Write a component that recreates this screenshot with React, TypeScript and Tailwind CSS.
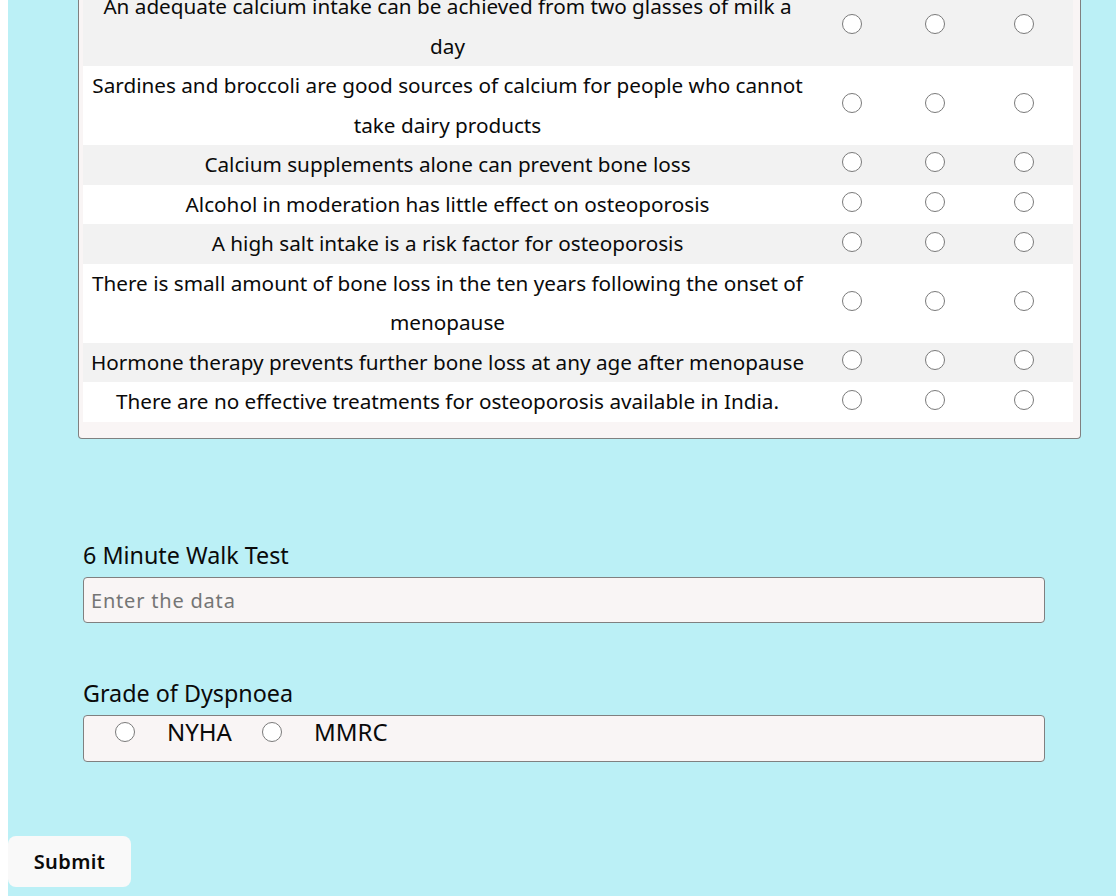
import React from "react";

const rows: { text: string }[] = [
  { text: "An adequate calcium intake can be achieved from two glasses of milk a day" },
  { text: "Sardines and broccoli are good sources of calcium for people who cannot take dairy products" },
  { text: "Calcium supplements alone can prevent bone loss" },
  { text: "Alcohol in moderation has little effect on osteoporosis" },
  { text: "A high salt intake is a risk factor for osteoporosis" },
  { text: "There is small amount of bone loss in the ten years following the onset of menopause" },
  { text: "Hormone therapy prevents further bone loss at any age after menopause" },
  { text: "There are no effective treatments for osteoporosis available in India." },
];

const Radio: React.FC = () => (
  <span className="inline-block w-5 h-5 rounded-full border border-[#7a7a7a] bg-white" />
);

const App: React.FC = () => {
  return (
    <div
      className="h-[896px] overflow-hidden bg-white pl-2"
      style={{ fontFamily: '"Noto Sans", "Open Sans", sans-serif' }}
    >
      <div className="h-full bg-[#bbf0f6] flex flex-col">
        {/* questionnaire card (top part scrolled away) */}
        <div className="-mt-[13px] ml-[70px] w-[1003px] border-x border-b border-[#808080] rounded-b-[4px] bg-[#f9f5f5] pl-[4px] pr-[6px] pb-[16px]">
          <table className="w-[990px] border-collapse text-[20.7px] text-[#0a0a0a]">
            <tbody>
              {rows.map((row, i) => (
                <tr key={i} className={i % 2 === 0 ? "bg-[#f2f2f2]" : "bg-white"}>
                  <td className="w-[729px] px-1 text-center leading-[39.55px] align-middle">
                    {row.text}
                  </td>
                  <td className="w-[80px] align-middle">
                    <div className="flex justify-center pb-[5px]">
                      <Radio />
                    </div>
                  </td>
                  <td className="w-[86px] align-middle">
                    <div className="flex justify-center pb-[5px]">
                      <Radio />
                    </div>
                  </td>
                  <td className="w-[95px] align-middle">
                    <div className="flex justify-center pb-[5px] pr-[3px]">
                      <Radio />
                    </div>
                  </td>
                </tr>
              ))}
            </tbody>
          </table>
        </div>

        {/* 6 minute walk test */}
        <div className="ml-[75px] mt-[98px] w-[962px]">
          <div className="h-[36px] leading-[36px] text-[23.3px] text-[#0a0a0a]">6 Minute Walk Test</div>
          <input
            type="text"
            placeholder="Enter the data"
            className="mt-[4px] w-full h-[46px] rounded-[4px] border border-[#808080] bg-[#f9f5f5] px-[7px] text-[20px] tracking-[0.04em] placeholder:text-[#757575] outline-none"
          />
        </div>

        {/* grade of dyspnoea */}
        <div className="ml-[75px] mt-[52px] w-[962px]">
          <div className="h-[36px] leading-[36px] text-[23.3px] text-[#0a0a0a]">Grade of Dyspnoea</div>
          <div className="mt-[4px] h-[47px] rounded-[4px] border border-[#808080] bg-[#f9f5f5] flex items-start pl-[31px] text-[24px] text-[#0a0a0a]">
            <label className="flex items-center h-[32px]">
              <Radio />
              <span className="ml-[32px] leading-[32px]">NYHA</span>
            </label>
            <label className="flex items-center h-[32px] ml-[30px]">
              <Radio />
              <span className="ml-[32px] leading-[32px]">MMRC</span>
            </label>
          </div>
        </div>

        {/* submit */}
        <div className="mt-[74px]">
          <button className="w-[123px] h-[51px] rounded-[8px] bg-[#f9f9f9] text-[20px] font-semibold text-[#0a0a0a] tracking-[0.02em]">
            Submit
          </button>
        </div>
      </div>
    </div>
  );
};

export default App;
